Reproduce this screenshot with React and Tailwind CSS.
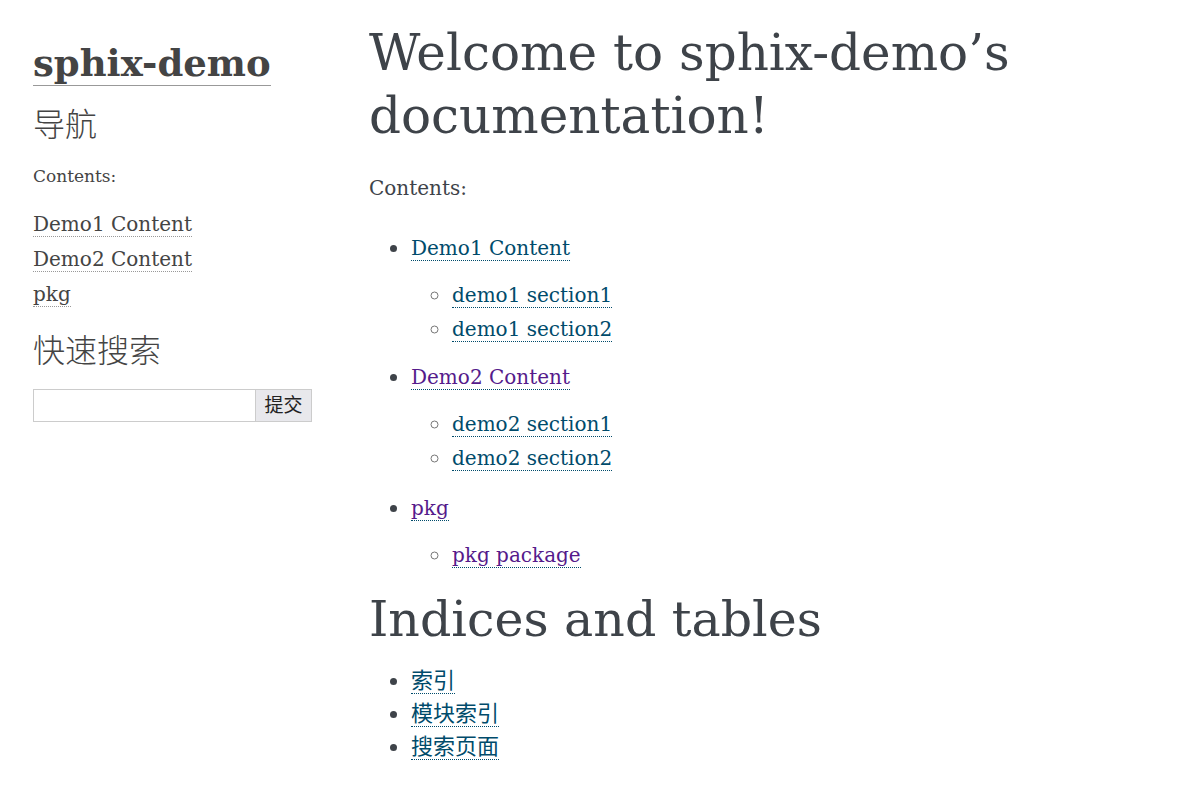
import React from "react";

const serif = { fontFamily: '"DejaVu Serif", "Noto Sans CJK SC", serif' };

function Link({ children, visited, side }) {
  const color = side
    ? "text-[#444] border-[#999]"
    : visited
    ? "text-[#551a8b] border-[#004b6b]"
    : "text-[#004b6b] border-[#004b6b]";
  return (
    <a href="#" className={`${color} border-b border-dotted no-underline`}>
      {children}
    </a>
  );
}

function Sidebar() {
  return (
    <div className="w-[369px] shrink-0 pl-[33px] pr-[57px] pt-[41px]">
      <h1 className="text-[37px] font-bold leading-[1.2] text-[#444]">
        <a href="#" className="border-b border-[#999]">
          sphix-demo
        </a>
      </h1>
      <h3 className="mt-[21px] text-[32px] leading-[1.2] font-light text-[#444]">导航</h3>
      <p className="mt-[19px] text-[17px] text-[#444]">Contents:</p>
      <ul className="mt-[18px] text-[20px] leading-[35px] text-[#444]">
        <li>
          <Link side>Demo1 Content</Link>
        </li>
        <li>
          <Link side>Demo2 Content</Link>
        </li>
        <li>
          <Link side>pkg</Link>
        </li>
      </ul>
      <h3 className="mt-[20px] text-[32px] leading-[1.2] font-light text-[#444]">快速搜索</h3>
      <form className="mt-[18px] flex">
        <input
          type="text"
          className="w-[223px] h-[33px] border border-[#ccc] bg-white"
        />
        <button
          type="button"
          className="w-[56px] h-[33px] border border-l-0 border-[#ccc] bg-[#e8e8ec] text-[19px] text-[#222]"
        >
          提交
        </button>
      </form>
    </div>
  );
}

function Sub({ items, visited }) {
  return (
    <ul className="list-[circle] pl-[41px] my-[13px] marker:text-[18px] marker:text-[#777]">
      {items.map((t) => (
        <li key={t} className="leading-[33px]">
          <Link visited={visited}>{t}</Link>
        </li>
      ))}
    </ul>
  );
}

export default function App() {
  return (
    <div className="min-h-screen bg-white flex text-[#3e4349]" style={serif}>
      <Sidebar />
      <div className="flex-1 pt-[22px] text-[20px]">
        <h1 className="text-[50px] leading-[63px] font-normal">
          Welcome to sphix-demo’s documentation!
        </h1>
        <p className="mt-[25px] leading-[30px]">Contents:</p>
        <ul className="list-disc pl-[42px] mt-[27px] leading-[34px] marker:text-[24px] marker:text-[#3e4349]">
          <li>
            <Link>Demo1 Content</Link>
            <Sub items={["demo1 section1", "demo1 section2"]} />
          </li>
          <li>
            <Link visited>Demo2 Content</Link>
            <Sub items={["demo2 section1", "demo2 section2"]} />
          </li>
          <li className="pt-[2px]">
            <Link visited>pkg</Link>
            <Sub items={["pkg package"]} visited />
          </li>
        </ul>
        <h2 className="mt-[16px] text-[49px] leading-[63px] font-normal">
          Indices and tables
        </h2>
        <ul className="list-disc pl-[42px] mt-[13px] leading-[33px] text-[22px] marker:text-[24px]">
          <li>
            <Link>索引</Link>
          </li>
          <li>
            <Link>模块索引</Link>
          </li>
          <li>
            <Link>搜索页面</Link>
          </li>
        </ul>
      </div>
    </div>
  );
}
